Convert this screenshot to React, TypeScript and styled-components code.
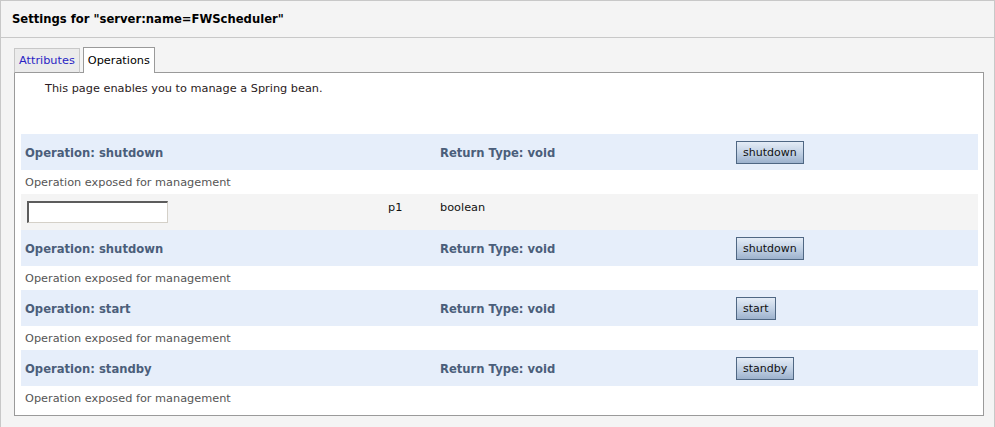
import React from "react";
import styled, { createGlobalStyle } from "styled-components";

const Global = createGlobalStyle`
  html, body { margin: 0; padding: 0; background: #ffffff; }
  body { font-family: "DejaVu Sans", Tahoma, sans-serif; font-size: 11.3px; }
  * { box-sizing: border-box; }
`;

const Panel = styled.div`
  width: 995px;
  height: 427px;
  background: #f4f4f4;
  border: 1px solid #c8c8c8;
  border-bottom: none;
`;

const PanelHeader = styled.div`
  height: 37px;
  border-bottom: 1px solid #c8c8c8;
  display: flex;
  align-items: center;
  padding-left: 11px;
  font-weight: bold;
  font-size: 11.6px;
  color: #000;
`;

const PanelBody = styled.div`
  padding: 10px 10px 0 13px;
`;

const TabBar = styled.div`
  display: flex;
  align-items: flex-end;
  gap: 3px;
  height: 25px;
  margin-bottom: -1px;
  position: relative;
  z-index: 1;
`;

const Tab = styled.div<{ $active?: boolean }>`
  display: flex;
  align-items: center;
  padding: 0 4px 0 4px;
  height: ${(p) => (p.$active ? "26px" : "25px")};
  border: 1px solid ${(p) => (p.$active ? "#9a9a9a" : "#c8c8c8")};
  border-bottom: ${(p) => (p.$active ? "none" : "1px solid #9a9a9a")};
  background: ${(p) => (p.$active ? "#ffffff" : "#ebebeb")};
  color: ${(p) => (p.$active ? "#000" : "#2a1fc4")};
  padding-bottom: ${(p) => (p.$active ? "1px" : "0")};
`;

const Content = styled.div`
  width: 970px;
  height: 344px;
  background: #fff;
  border: 1px solid #9a9a9a;
  padding: 0 5px 0 6px;
`;

const Intro = styled.p`
  margin: 0;
  padding: 9px 0 0 24px;
  height: 61px;
  color: #2a1a22;
`;

const HeadRow = styled.div`
  display: grid;
  grid-template-columns: 415px 296px 1fr;
  align-items: center;
  height: 36px;
  padding-top: 1px;
  background: #e6eefa;
  font-weight: bold;
  font-size: 11.6px;
  color: #4b5e7a;
`;

const Cell = styled.div`
  padding-left: 4px;
`;

const DescRow = styled.div`
  height: 24px;
  display: flex;
  align-items: center;
  padding-left: 4px;
  color: #555;
`;

const ParamRow = styled.div`
  display: grid;
  grid-template-columns: 363px 52px 1fr;
  align-items: start;
  height: 36px;
  padding-top: 7px;
  background: #f4f4f4;
  color: #111;
`;

const ParamCell = styled.div`
  padding: 0 0 0 4px;
  line-height: 13px;
`;

const ParamInput = styled.input`
  display: block;
  margin-left: 6px;
  width: 141px;
  height: 22px;
  border-style: solid;
  border-width: 2px 1px 1px 2px;
  border-color: #5c5c5c #d4d0c8 #d4d0c8 #5c5c5c;
  background: #fff;
  font-family: inherit;
  font-size: 11px;
  padding: 0 2px;
`;

const OpButton = styled.button`
  height: 23px;
  padding: 0 6px;
  border: 1px solid #4f6783;
  background: linear-gradient(#e4ecf6, #c3d2e5 50%, #9db2cd);
  font-family: inherit;
  font-size: 11px;
  color: #111;
  cursor: pointer;
`;

type Op = { name: string; param?: boolean };

const ops: Op[] = [
  { name: "shutdown", param: true },
  { name: "shutdown" },
  { name: "start" },
  { name: "standby" },
];

export default function App() {
  return (
    <>
      <Global />
      <Panel>
        <PanelHeader>Settings for "server:name=FWScheduler"</PanelHeader>
        <PanelBody>
          <TabBar>
            <Tab>Attributes</Tab>
            <Tab $active>Operations</Tab>
          </TabBar>
          <Content>
            <Intro>This page enables you to manage a Spring bean.</Intro>
            {ops.map((op, i) => (
              <React.Fragment key={i}>
                <HeadRow>
                  <Cell>Operation: {op.name}</Cell>
                  <Cell>Return Type: void</Cell>
                  <Cell>
                    <OpButton>{op.name}</OpButton>
                  </Cell>
                </HeadRow>
                <DescRow>Operation exposed for management</DescRow>
                {op.param && (
                  <ParamRow>
                    <div>
                      <ParamInput type="text" />
                    </div>
                    <ParamCell>p1</ParamCell>
                    <ParamCell>boolean</ParamCell>
                  </ParamRow>
                )}
              </React.Fragment>
            ))}
          </Content>
        </PanelBody>
      </Panel>
    </>
  );
}
